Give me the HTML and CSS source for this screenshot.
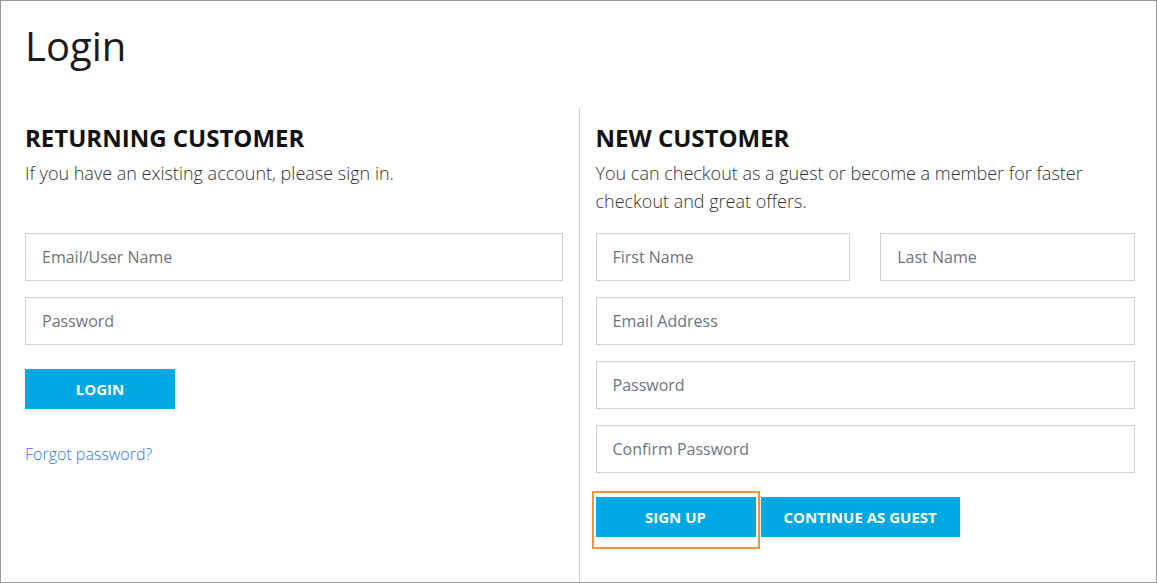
FILE: index.html
```html
<!DOCTYPE html>
<html lang="en">
<head>
<meta charset="utf-8">
<title>Login</title>
<link rel="stylesheet" href="styles.css">
</head>
<body>
<div class="page">
  <h1 class="title">Login</h1>
  <div class="columns">
    <section class="col col-left">
      <h2 class="heading">RETURNING CUSTOMER</h2>
      <p class="desc">If you have an existing account, please sign in.</p>
      <div class="field"><input class="input" type="text" placeholder="Email/User Name"></div>
      <div class="field"><input class="input" type="password" placeholder="Password"></div>
      <div class="actions">
        <button class="btn btn-login">LOGIN</button>
      </div>
      <a class="forgot" href="#">Forgot password?</a>
    </section>
    <section class="col col-right">
      <h2 class="heading">NEW CUSTOMER</h2>
      <p class="desc">You can checkout as a guest or become a member for faster checkout and great offers.</p>
      <div class="field field-row">
        <input class="input" type="text" placeholder="First Name">
        <input class="input" type="text" placeholder="Last Name">
      </div>
      <div class="field"><input class="input" type="email" placeholder="Email Address"></div>
      <div class="field"><input class="input" type="password" placeholder="Password"></div>
      <div class="field"><input class="input" type="password" placeholder="Confirm Password"></div>
      <div class="actions actions-right">
        <div class="highlight-wrap">
          <button class="btn btn-signup">SIGN UP</button>
          <span class="highlight"></span>
        </div>
        <button class="btn btn-guest">CONTINUE AS GUEST</button>
      </div>
    </section>
  </div>
</div>
</body>
</html>
```

FILE: styles.css
```css
* { box-sizing: border-box; }
html, body { margin: 0; padding: 0; }
body {
  font-family: "Open Sans", "Liberation Sans", sans-serif;
  color: #333;
  background: #fff;
}
.page {
  width: 1157px;
  height: 583px;
  border: 1px solid #999;
  padding: 0 21px 0 24px;
  overflow: hidden;
}
.title {
  margin: 0;
  padding-top: 18px;
  height: 107px;
  font-size: 40px;
  font-weight: 400;
  line-height: 54px;
  color: #1a1a1a;
}
.columns {
  display: flex;
  height: 474px;
}
.col { padding-top: 14px; }
.col-left {
  width: 555px;
  padding-right: 16px;
  border-right: 1px solid #d4d4d4;
}
.col-right {
  width: 556px;
  padding-left: 16px;
}
.heading {
  margin: 0;
  font-size: 24px;
  font-weight: 700;
  line-height: 32px;
  color: #111;
}
.desc {
  margin: 5px 0 0;
  font-size: 18px;
  font-weight: 300;
  line-height: 28px;
  color: #333;
  min-height: 56px;
  margin-bottom: 18px;
}
.field { margin-bottom: 16px; }
.field-row {
  display: flex;
  gap: 30px;
}
.field-row .input { flex: 1; width: auto; min-width: 0; }
.input {
  display: block;
  width: 100%;
  height: 48px;
  border: 1px solid #cfd3d8;
  padding: 0 16px;
  font-family: "Open Sans", "Liberation Sans", sans-serif;
  font-size: 16px;
  color: #333;
  background: #fff;
  outline: none;
}
.input::placeholder { color: #6d7580; opacity: 1; }
.actions {
  display: flex;
  gap: 5px;
  margin-top: 24px;
}
.btn {
  height: 40px;
  border: 0;
  background: #00a8e1;
  color: #fff;
  font-family: "Open Sans", "Liberation Sans", sans-serif;
  font-size: 15px;
  font-weight: 700;
  padding: 0 23px;
  cursor: pointer;
}
.btn-login { width: 150px; }
.btn-signup { width: 160px; display: block; }
.highlight-wrap { position: relative; }
.highlight {
  position: absolute;
  left: -4px;
  top: -6px;
  width: 168px;
  height: 58px;
  border: 2px solid #f0943f;
  pointer-events: none;
}
.forgot {
  display: inline-block;
  margin-top: 34px;
  font-size: 16px;
  font-weight: 300;
  color: #2b7de9;
  text-decoration: none;
}
```
